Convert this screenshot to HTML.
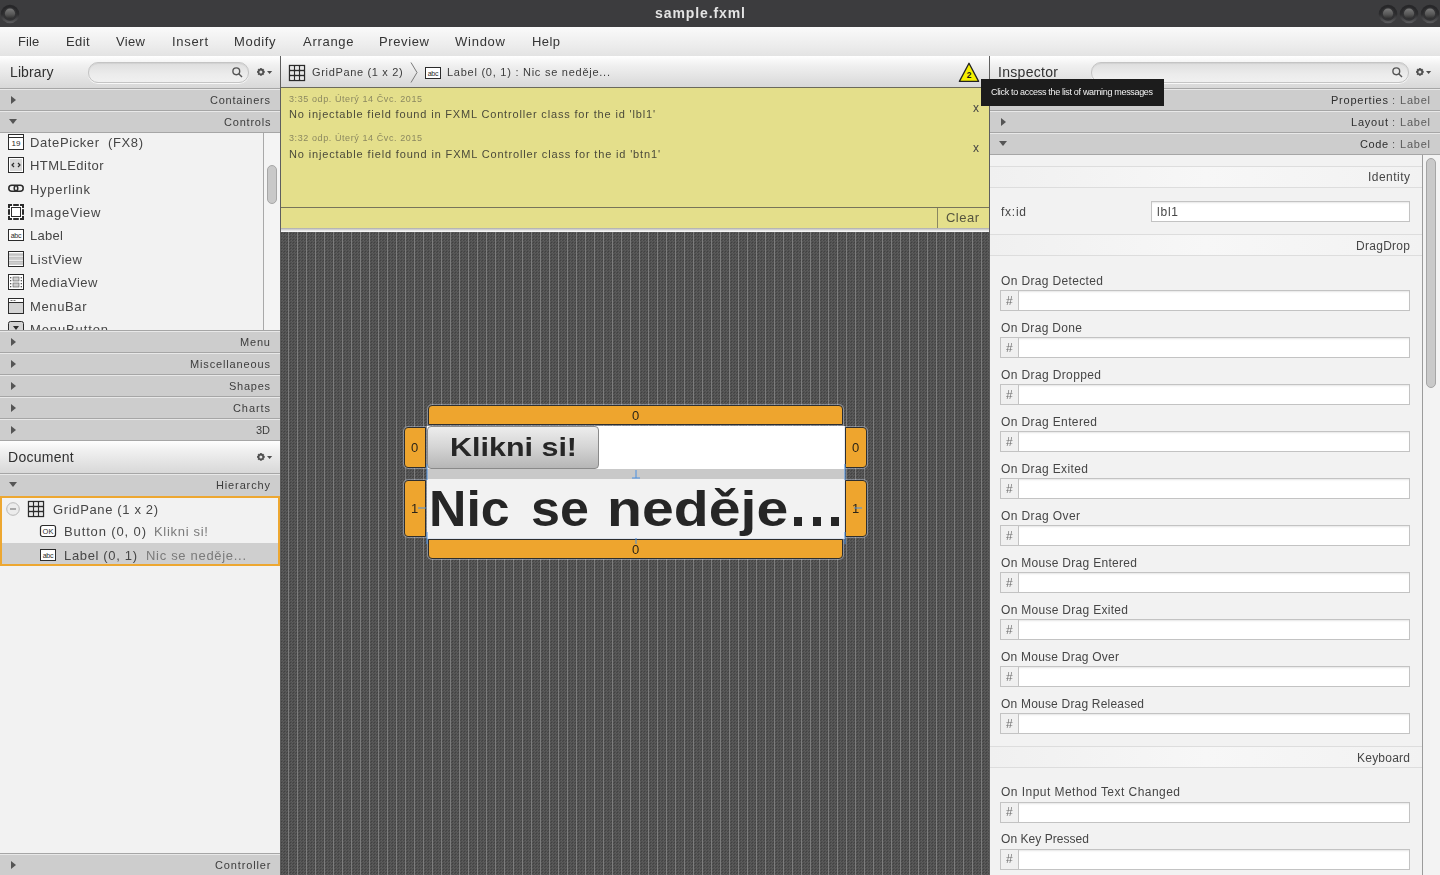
<!DOCTYPE html><html><head><meta charset="utf-8"><style>
*{box-sizing:border-box;margin:0;padding:0}
html,body{width:1440px;height:875px;overflow:hidden;background:#f2f2f2;font-family:"Liberation Sans",sans-serif;color:#333}
.a{position:absolute;white-space:pre}
.tx{will-change:transform}
svg{position:absolute;overflow:visible}
.hdr{background:linear-gradient(#fefefe,#f4f4f4 20%,#d9d9d9);}
.sec{background:#cdcdcd;border-top:1px solid #a4a4a4;box-shadow:inset 0 1px 0 #e9e9e9}
.trir{position:absolute;width:0;height:0;border-top:4px solid transparent;border-bottom:4px solid transparent;border-left:5px solid #555}
.trid{position:absolute;width:0;height:0;border-left:4px solid transparent;border-right:4px solid transparent;border-top:5px solid #555}
.srch{border:1px solid #c4c4c4;border-radius:10px;background:linear-gradient(#dedede,#ececec 60%,#f0f0f0);box-shadow:inset 0 1px 1px rgba(0,0,0,.06),0 1px 0 rgba(255,255,255,.8)}
.inp{background:#fff;border:1px solid #c3c3c3;box-shadow:inset 0 2px 2px -1px rgba(0,0,0,.10)}
.band{background:linear-gradient(90deg,#f1f1f1,#f6f6f6 50%,#f3f3f3);border-top:1px solid #dedede;border-bottom:1px solid #dedede}
</style></head><body><div class="a" style="left:0px;top:0px;width:1440px;height:27px;background:#3c3c3e"></div>
<svg style="left:0.3000000000000007px;top:3.8000000000000007px" width="20" height="20" viewBox="0 0 20 20"><defs><linearGradient id="wr" x1="0" y1="0" x2="0" y2="1"><stop offset="0" stop-color="#252527"/><stop offset="0.5" stop-color="#2c2c2e"/><stop offset="1" stop-color="#5e5e60"/></linearGradient><linearGradient id="wd" x1="0" y1="0" x2="0" y2="1"><stop offset="0" stop-color="#7a7a7a"/><stop offset="0.6" stop-color="#555"/><stop offset="1" stop-color="#2e2e2e"/></linearGradient></defs><circle cx="10" cy="10" r="9.3" fill="url(#wr)"/><circle cx="10" cy="10" r="6.8" fill="#323234"/><circle cx="10" cy="9.6" r="5.1" fill="url(#wd)"/></svg>
<svg style="left:1378px;top:3.8000000000000007px" width="20" height="20" viewBox="0 0 20 20"><defs><linearGradient id="wr" x1="0" y1="0" x2="0" y2="1"><stop offset="0" stop-color="#252527"/><stop offset="0.5" stop-color="#2c2c2e"/><stop offset="1" stop-color="#5e5e60"/></linearGradient><linearGradient id="wd" x1="0" y1="0" x2="0" y2="1"><stop offset="0" stop-color="#7a7a7a"/><stop offset="0.6" stop-color="#555"/><stop offset="1" stop-color="#2e2e2e"/></linearGradient></defs><circle cx="10" cy="10" r="9.3" fill="url(#wr)"/><circle cx="10" cy="10" r="6.8" fill="#323234"/><circle cx="10" cy="9.6" r="5.1" fill="url(#wd)"/></svg>
<svg style="left:1399px;top:3.8000000000000007px" width="20" height="20" viewBox="0 0 20 20"><defs><linearGradient id="wr" x1="0" y1="0" x2="0" y2="1"><stop offset="0" stop-color="#252527"/><stop offset="0.5" stop-color="#2c2c2e"/><stop offset="1" stop-color="#5e5e60"/></linearGradient><linearGradient id="wd" x1="0" y1="0" x2="0" y2="1"><stop offset="0" stop-color="#7a7a7a"/><stop offset="0.6" stop-color="#555"/><stop offset="1" stop-color="#2e2e2e"/></linearGradient></defs><circle cx="10" cy="10" r="9.3" fill="url(#wr)"/><circle cx="10" cy="10" r="6.8" fill="#323234"/><circle cx="10" cy="9.6" r="5.1" fill="url(#wd)"/></svg>
<svg style="left:1420px;top:3.8000000000000007px" width="20" height="20" viewBox="0 0 20 20"><defs><linearGradient id="wr" x1="0" y1="0" x2="0" y2="1"><stop offset="0" stop-color="#252527"/><stop offset="0.5" stop-color="#2c2c2e"/><stop offset="1" stop-color="#5e5e60"/></linearGradient><linearGradient id="wd" x1="0" y1="0" x2="0" y2="1"><stop offset="0" stop-color="#7a7a7a"/><stop offset="0.6" stop-color="#555"/><stop offset="1" stop-color="#2e2e2e"/></linearGradient></defs><circle cx="10" cy="10" r="9.3" fill="url(#wr)"/><circle cx="10" cy="10" r="6.8" fill="#323234"/><circle cx="10" cy="9.6" r="5.1" fill="url(#wd)"/></svg>
<div class="a tx" style="top:6.15px;font-size:14px;line-height:14px;color:#e4e4e4;font-weight:bold;letter-spacing:0.906px;left:654.55px;">sample.fxml</div>
<div class="a" style="left:0px;top:27px;width:1440px;height:29px;background:linear-gradient(#fafafa,#ebebeb 70%,#e3e3e3)"></div>
<div class="a tx" style="top:35.20px;font-size:13px;line-height:13px;color:#353535;letter-spacing:0.116px;left:18.3px;">File</div>
<div class="a tx" style="top:35.20px;font-size:13px;line-height:13px;color:#353535;letter-spacing:0.431px;left:66.3px;">Edit</div>
<div class="a tx" style="top:35.20px;font-size:13px;line-height:13px;color:#353535;letter-spacing:0.349px;left:116.3px;">View</div>
<div class="a tx" style="top:35.20px;font-size:13px;line-height:13px;color:#353535;letter-spacing:0.697px;left:171.9px;">Insert</div>
<div class="a tx" style="top:35.20px;font-size:13px;line-height:13px;color:#353535;letter-spacing:0.661px;left:234.4px;">Modify</div>
<div class="a tx" style="top:35.20px;font-size:13px;line-height:13px;color:#353535;letter-spacing:0.708px;left:302.5px;">Arrange</div>
<div class="a tx" style="top:35.20px;font-size:13px;line-height:13px;color:#353535;letter-spacing:0.625px;left:378.7px;">Preview</div>
<div class="a tx" style="top:35.20px;font-size:13px;line-height:13px;color:#353535;letter-spacing:0.750px;left:455px;">Window</div>
<div class="a tx" style="top:35.20px;font-size:13px;line-height:13px;color:#353535;letter-spacing:0.417px;left:532px;">Help</div>
<div class="a" style="left:0px;top:56px;width:280px;height:32px;background:linear-gradient(#ffffff,#f0f0f0 30%,#d8d8d8)"></div>
<div class="a tx" style="top:64.75px;font-size:14px;line-height:14px;color:#303030;letter-spacing:0.101px;left:9.7px;">Library</div>
<div class="a srch" style="left:88px;top:62px;width:161px;height:21px"></div>
<svg style="left:232px;top:67px" width="11" height="11" viewBox="0 0 11 11"><circle cx="4.3" cy="4.3" r="3.4" fill="none" stroke="#555" stroke-width="1.4"/><path d="M6.7 6.7L10 10" stroke="#555" stroke-width="1.4"/></svg>
<svg style="left:257px;top:68px" width="16" height="10" viewBox="0 0 16 10"><g fill="#4e4e4e"><rect x="2.9" y="0.1" width="2.0" height="7.6" transform="rotate(0 3.9 3.9)"/><rect x="2.9" y="0.1" width="2.0" height="7.6" transform="rotate(45 3.9 3.9)"/><rect x="2.9" y="0.1" width="2.0" height="7.6" transform="rotate(90 3.9 3.9)"/><rect x="2.9" y="0.1" width="2.0" height="7.6" transform="rotate(135 3.9 3.9)"/><circle cx="3.9" cy="3.9" r="2.9"/></g><circle cx="3.9" cy="3.9" r="1.5" fill="#e2e2e2"/><path d="M10 3h5.2l-2.6 3z" fill="#4e4e4e"/></svg>
<div class="a" style="left:0px;top:88px;width:280px;height:22px;background:#cdcdcd;border-top:1px solid #a6a6a6;box-shadow:inset 0 1px 0 #e8e8e8"></div>
<div class="trir" style="left:11px;top:96px"></div>
<div class="a tx" style="top:95.09px;font-size:11px;line-height:11px;color:#3c3c3c;letter-spacing:0.755px;right:1169.24px;">Containers</div>
<div class="a" style="left:0px;top:110px;width:280px;height:22px;background:#cdcdcd;border-top:1px solid #a6a6a6;box-shadow:inset 0 1px 0 #e8e8e8"></div>
<div class="trid" style="left:9px;top:119px"></div>
<div class="a tx" style="top:117.09px;font-size:11px;line-height:11px;color:#3c3c3c;letter-spacing:0.790px;right:1169.21px;">Controls</div>
<div class="a" style="left:0px;top:132px;width:280px;height:1px;background:#a6a6a6"></div>
<div class="a" style="left:0px;top:133px;width:280px;height:197px;background:#f2f2f2"></div>
<div class="a" style="left:263px;top:133px;width:1px;height:197px;background:#a9a9a9"></div>
<div class="a" style="left:264px;top:133px;width:16px;height:197px;background:#f4f4f4"></div>
<div class="a" style="left:267px;top:165px;width:10px;height:39px;background:#c9c9c9;border:1px solid #a7a7a7;border-radius:5px"></div>
<svg style="left:8px;top:134px" width="16" height="16" viewBox="0 0 16 16"><rect x="0.5" y="0.5" width="15" height="15" fill="#fff" stroke="#2b2b2b"/><path d="M1 3.5h14" stroke="#2b2b2b"/><text x="8" y="12.3" font-size="8" font-family="Liberation Sans" text-anchor="middle" fill="#2b2b2b">19</text></svg>
<div class="a tx" style="top:136.00px;font-size:13px;line-height:13px;color:#464646;letter-spacing:0.605px;left:29.5px;">DatePicker  (FX8)</div>
<svg style="left:8px;top:157px" width="16" height="16" viewBox="0 0 16 16"><rect x="0.5" y="0.5" width="15" height="15" fill="#fff" stroke="#2b2b2b"/><rect x="2" y="2" width="12" height="12" fill="#d8d8d8"/><path d="M6 6L4 8L6 10M10 6L12 8L10 10" fill="none" stroke="#2b2b2b" stroke-width="1.2"/></svg>
<div class="a tx" style="top:159.36px;font-size:13px;line-height:13px;color:#464646;letter-spacing:0.460px;left:29.5px;">HTMLEditor</div>
<svg style="left:8px;top:181px" width="16" height="16" viewBox="0 0 16 16"><rect x="0.8" y="4.3" width="9" height="6" rx="3" fill="none" stroke="#2b2b2b" stroke-width="1.5"/><rect x="6.2" y="4.3" width="9" height="6" rx="3" fill="none" stroke="#2b2b2b" stroke-width="1.5"/></svg>
<div class="a tx" style="top:182.72px;font-size:13px;line-height:13px;color:#464646;letter-spacing:0.727px;left:29.5px;">Hyperlink</div>
<svg style="left:8px;top:204px" width="16" height="16" viewBox="0 0 16 16"><rect x="1" y="1" width="14" height="14" fill="#fff" stroke="#2b2b2b" stroke-width="2"/><g fill="#f2f2f2"><rect x="4" y="0" width="1.2" height="2"/><rect x="10.8" y="0" width="1.2" height="2"/><rect x="4" y="14" width="1.2" height="2"/><rect x="10.8" y="14" width="1.2" height="2"/><rect x="0" y="4" width="2" height="1.2"/><rect x="0" y="10.8" width="2" height="1.2"/><rect x="14" y="4" width="2" height="1.2"/><rect x="14" y="10.8" width="2" height="1.2"/></g><rect x="3.5" y="3.5" width="9" height="9" fill="#fff" stroke="#2b2b2b"/></svg>
<div class="a tx" style="top:206.08px;font-size:13px;line-height:13px;color:#464646;letter-spacing:0.803px;left:29.5px;">ImageView</div>
<svg style="left:8px;top:227px" width="16" height="16" viewBox="0 0 16 16"><rect x="0.5" y="2.5" width="15" height="11" fill="#fff" stroke="#2b2b2b"/><text x="8" y="10.6" font-size="7" font-family="Liberation Sans" text-anchor="middle" fill="#2a2a2a" letter-spacing="-0.2">abc</text></svg>
<div class="a tx" style="top:229.44px;font-size:13px;line-height:13px;color:#464646;letter-spacing:0.297px;left:29.5px;">Label</div>
<svg style="left:8px;top:251px" width="16" height="16" viewBox="0 0 16 16"><rect x="0.5" y="0.5" width="15" height="15" fill="#fff" stroke="#2b2b2b"/><rect x="1" y="3" width="14" height="2.5" fill="#cfcfcf"/><rect x="1" y="6.8" width="14" height="2.5" fill="#cfcfcf"/><rect x="1" y="10.6" width="14" height="2.5" fill="#cfcfcf"/><path d="M1 2.8h14M1 6.6h14M1 10.4h14M1 13.3h14" stroke="#888" stroke-width="0.5"/></svg>
<div class="a tx" style="top:252.80px;font-size:13px;line-height:13px;color:#464646;letter-spacing:0.545px;left:29.5px;">ListView</div>
<svg style="left:8px;top:274px" width="16" height="16" viewBox="0 0 16 16"><rect x="0.5" y="0.5" width="15" height="15" fill="#fff" stroke="#2b2b2b"/><rect x="5" y="3" width="6" height="4" fill="#ccc" stroke="#555" stroke-width="0.6"/><rect x="5" y="9" width="6" height="4" fill="#ccc" stroke="#555" stroke-width="0.6"/><g fill="#555"><rect x="2" y="3" width="1.3" height="1.3"/><rect x="2" y="6" width="1.3" height="1.3"/><rect x="2" y="9" width="1.3" height="1.3"/><rect x="2" y="12" width="1.3" height="1.3"/><rect x="12.7" y="3" width="1.3" height="1.3"/><rect x="12.7" y="6" width="1.3" height="1.3"/><rect x="12.7" y="9" width="1.3" height="1.3"/><rect x="12.7" y="12" width="1.3" height="1.3"/></g></svg>
<div class="a tx" style="top:276.16px;font-size:13px;line-height:13px;color:#464646;letter-spacing:0.518px;left:29.5px;">MediaView</div>
<svg style="left:8px;top:298px" width="16" height="16" viewBox="0 0 16 16"><rect x="0.5" y="0.5" width="15" height="15" fill="#d4d4d4" stroke="#2b2b2b"/><rect x="1" y="1" width="14" height="3" fill="#fff"/><path d="M1 4.5h14" stroke="#2b2b2b"/><path d="M2.5 2.5h2M5.5 2.5h2" stroke="#555" stroke-width="0.8"/></svg>
<div class="a tx" style="top:299.52px;font-size:13px;line-height:13px;color:#464646;letter-spacing:0.625px;left:29.5px;">MenuBar</div>
<svg style="left:8px;top:321px" width="16" height="16" viewBox="0 0 16 16"><rect x="0.5" y="0.5" width="15" height="15" rx="2" fill="#d4d4d4" stroke="#2b2b2b"/><path d="M5 5h6l-3 4z" fill="#2b2b2b"/></svg>
<div class="a tx" style="top:322.88px;font-size:13px;line-height:13px;color:#464646;letter-spacing:0.877px;left:29.5px;">MenuButton</div>
<div class="a" style="left:0px;top:330px;width:280px;height:22px;background:#cdcdcd;border-top:1px solid #a6a6a6;box-shadow:inset 0 1px 0 #e8e8e8"></div>
<div class="trir" style="left:11px;top:338px"></div>
<div class="a tx" style="top:337.19px;font-size:11px;line-height:11px;color:#3c3c3c;letter-spacing:0.823px;right:1169.18px;">Menu</div>
<div class="a" style="left:0px;top:352px;width:280px;height:22px;background:#cdcdcd;border-top:1px solid #a6a6a6;box-shadow:inset 0 1px 0 #e8e8e8"></div>
<div class="trir" style="left:11px;top:360px"></div>
<div class="a tx" style="top:359.19px;font-size:11px;line-height:11px;color:#3c3c3c;letter-spacing:0.858px;right:1169.14px;">Miscellaneous</div>
<div class="a" style="left:0px;top:374px;width:280px;height:22px;background:#cdcdcd;border-top:1px solid #a6a6a6;box-shadow:inset 0 1px 0 #e8e8e8"></div>
<div class="trir" style="left:11px;top:382px"></div>
<div class="a tx" style="top:381.19px;font-size:11px;line-height:11px;color:#3c3c3c;letter-spacing:0.738px;right:1169.26px;">Shapes</div>
<div class="a" style="left:0px;top:396px;width:280px;height:22px;background:#cdcdcd;border-top:1px solid #a6a6a6;box-shadow:inset 0 1px 0 #e8e8e8"></div>
<div class="trir" style="left:11px;top:404px"></div>
<div class="a tx" style="top:403.19px;font-size:11px;line-height:11px;color:#3c3c3c;letter-spacing:0.919px;right:1169.08px;">Charts</div>
<div class="a" style="left:0px;top:418px;width:280px;height:22px;background:#cdcdcd;border-top:1px solid #a6a6a6;box-shadow:inset 0 1px 0 #e8e8e8"></div>
<div class="trir" style="left:11px;top:426px"></div>
<div class="a tx" style="top:425.19px;font-size:11px;line-height:11px;color:#3c3c3c;letter-spacing:-0.062px;right:1170.06px;">3D</div>
<div class="a" style="left:0px;top:440px;width:280px;height:1px;background:#a6a6a6"></div>
<div class="a" style="left:0px;top:441px;width:280px;height:32px;background:linear-gradient(#ffffff,#f0f0f0 30%,#d8d8d8)"></div>
<div class="a tx" style="top:450.45px;font-size:14px;line-height:14px;color:#303030;letter-spacing:0.270px;left:8px;">Document</div>
<svg style="left:257px;top:453px" width="16" height="10" viewBox="0 0 16 10"><g fill="#4e4e4e"><rect x="2.9" y="0.1" width="2.0" height="7.6" transform="rotate(0 3.9 3.9)"/><rect x="2.9" y="0.1" width="2.0" height="7.6" transform="rotate(45 3.9 3.9)"/><rect x="2.9" y="0.1" width="2.0" height="7.6" transform="rotate(90 3.9 3.9)"/><rect x="2.9" y="0.1" width="2.0" height="7.6" transform="rotate(135 3.9 3.9)"/><circle cx="3.9" cy="3.9" r="2.9"/></g><circle cx="3.9" cy="3.9" r="1.5" fill="#e2e2e2"/><path d="M10 3h5.2l-2.6 3z" fill="#4e4e4e"/></svg>
<div class="a" style="left:0px;top:473px;width:280px;height:23px;background:#cdcdcd;border-top:1px solid #a6a6a6;box-shadow:inset 0 1px 0 #e8e8e8"></div>
<div class="trid" style="left:9px;top:482px"></div>
<div class="a tx" style="top:479.69px;font-size:11px;line-height:11px;color:#3c3c3c;letter-spacing:0.865px;right:1169.13px;">Hierarchy</div>
<div class="a" style="left:0px;top:496px;width:280px;height:70px;background:#f2f2f2;border:2px solid #eda731"></div>
<div class="a" style="left:2px;top:543px;width:276px;height:21px;background:#cfcfcf"></div>
<svg style="left:6px;top:502px" width="15" height="15" viewBox="0 0 15 15"><circle cx="7" cy="7" r="6.3" fill="#ececec" stroke="#b8b8b8"/><path d="M4 7h6" stroke="#999" stroke-width="1.6"/></svg>
<svg style="left:28px;top:501px" width="16" height="16" viewBox="0 0 16 16"><rect x="0.5" y="0.5" width="15" height="15" fill="#fff" stroke="#2b2b2b"/><path d="M5.5 0.5v15M10.5 0.5v15M0.5 5.5h15M0.5 10.5h15" stroke="#2b2b2b" stroke-width="1.3"/><rect x="0.5" y="0.5" width="15" height="15" fill="none" stroke="#2b2b2b" stroke-width="1.3"/><g fill="#bbb"><rect x="2.4" y="2.4" width="1.2" height="1.2"/><rect x="7.4" y="2.4" width="1.2" height="1.2"/><rect x="12.4" y="2.4" width="1.2" height="1.2"/><rect x="2.4" y="7.4" width="1.2" height="1.2"/><rect x="7.4" y="7.4" width="1.2" height="1.2"/><rect x="12.4" y="7.4" width="1.2" height="1.2"/><rect x="2.4" y="12.4" width="1.2" height="1.2"/><rect x="7.4" y="12.4" width="1.2" height="1.2"/><rect x="12.4" y="12.4" width="1.2" height="1.2"/></g></svg>
<div class="a tx" style="top:502.60px;font-size:13px;line-height:13px;color:#464646;letter-spacing:0.642px;left:52.5px;">GridPane (1 x 2)</div>
<svg style="left:40px;top:525px" width="16" height="16" viewBox="0 0 16 16"><rect x="0.5" y="0.5" width="15" height="11" rx="2" fill="#fff" stroke="#2b2b2b" stroke-width="1.2"/><text x="8" y="9" font-size="7.5" font-family="Liberation Sans" text-anchor="middle" fill="#2b2b2b">OK</text></svg>
<div class="a tx" style="top:524.70px;font-size:13px;line-height:13px;color:#464646;letter-spacing:0.871px;left:63.5px;">Button (0, 0)</div>
<div class="a tx" style="top:524.70px;font-size:13px;line-height:13px;color:#7a7a7a;letter-spacing:0.701px;left:153.5px;">Klikni si!</div>
<svg style="left:40px;top:547px" width="16" height="16" viewBox="0 0 16 16"><rect x="0.5" y="2.5" width="15" height="11" fill="#fff" stroke="#2b2b2b"/><text x="8" y="10.6" font-size="7" font-family="Liberation Sans" text-anchor="middle" fill="#2a2a2a" letter-spacing="-0.2">abc</text></svg>
<div class="a tx" style="top:548.80px;font-size:13px;line-height:13px;color:#464646;letter-spacing:0.658px;left:63.5px;">Label (0, 1)</div>
<div class="a tx" style="top:548.80px;font-size:13px;line-height:13px;color:#7a7a7a;letter-spacing:0.693px;left:145.5px;">Nic se neděje...</div>
<div class="a" style="left:0px;top:853px;width:280px;height:22px;background:#cdcdcd;border-top:1px solid #a6a6a6;box-shadow:inset 0 1px 0 #e8e8e8"></div>
<div class="trir" style="left:11px;top:861px"></div>
<div class="a tx" style="top:860.19px;font-size:11px;line-height:11px;color:#3c3c3c;letter-spacing:0.868px;right:1169.13px;">Controller</div>
<div class="a" style="left:280px;top:56px;width:1px;height:819px;background:#5e5e5e"></div>
<div class="a" style="left:281px;top:56px;width:708px;height:31px;background:linear-gradient(#ffffff,#f0f0f0 30%,#d8d8d8)"></div>
<div class="a" style="left:281px;top:87px;width:708px;height:1px;background:#6b6a5a"></div>
<svg style="left:289px;top:65px" width="16" height="16" viewBox="0 0 16 16"><rect x="0.5" y="0.5" width="15" height="15" fill="#fff" stroke="#2b2b2b"/><path d="M5.5 0.5v15M10.5 0.5v15M0.5 5.5h15M0.5 10.5h15" stroke="#2b2b2b" stroke-width="1.3"/><rect x="0.5" y="0.5" width="15" height="15" fill="none" stroke="#2b2b2b" stroke-width="1.3"/><g fill="#bbb"><rect x="2.4" y="2.4" width="1.2" height="1.2"/><rect x="7.4" y="2.4" width="1.2" height="1.2"/><rect x="12.4" y="2.4" width="1.2" height="1.2"/><rect x="2.4" y="7.4" width="1.2" height="1.2"/><rect x="7.4" y="7.4" width="1.2" height="1.2"/><rect x="12.4" y="7.4" width="1.2" height="1.2"/><rect x="2.4" y="12.4" width="1.2" height="1.2"/><rect x="7.4" y="12.4" width="1.2" height="1.2"/><rect x="12.4" y="12.4" width="1.2" height="1.2"/></g></svg>
<div class="a tx" style="top:67.39px;font-size:11px;line-height:11px;color:#3c3c3c;letter-spacing:0.666px;left:311.8px;">GridPane (1 x 2)</div>
<svg style="left:410px;top:62px" width="8" height="21" viewBox="0 0 8 21"><path d="M1 0.5L7 10.5L1 20.5" fill="none" stroke="#7a7a7a" stroke-width="1"/></svg>
<svg style="left:425px;top:65px" width="16" height="16" viewBox="0 0 16 16"><rect x="0.5" y="2.5" width="15" height="11" fill="#fff" stroke="#2b2b2b"/><text x="8" y="10.6" font-size="7" font-family="Liberation Sans" text-anchor="middle" fill="#2a2a2a" letter-spacing="-0.2">abc</text></svg>
<div class="a tx" style="top:67.39px;font-size:11px;line-height:11px;color:#3c3c3c;letter-spacing:0.745px;left:447px;">Label (0, 1) : Nic se neděje...</div>
<svg style="left:958px;top:62px" width="22" height="21" viewBox="0 0 22 21"><path d="M11 1.3L20.6 19.4H1.4Z" fill="#f5f000" stroke="#222" stroke-width="1.3" stroke-linejoin="round"/><text x="11" y="15.6" font-size="8.5" font-weight="bold" font-family="Liberation Sans" text-anchor="middle" fill="#1a1a1a">2</text></svg>
<div class="a" style="left:281px;top:88px;width:708px;height:140px;background:#e4df8b"></div>
<div class="a tx" style="top:94.68px;font-size:9px;line-height:9px;color:#8b8860;letter-spacing:0.590px;left:289px;">3:35 odp. Úterý 14 Čvc. 2015</div>
<div class="a tx" style="top:109.29px;font-size:11px;line-height:11px;color:#4b4a3a;letter-spacing:0.834px;left:289px;">No injectable field found in FXML Controller class for the id &#x27;lbl1&#x27;</div>
<div class="a tx" style="top:102.14px;font-size:12px;line-height:12px;color:#444;left:972.5px;">x</div>
<div class="a tx" style="top:134.48px;font-size:9px;line-height:9px;color:#8b8860;letter-spacing:0.590px;left:289px;">3:32 odp. Úterý 14 Čvc. 2015</div>
<div class="a tx" style="top:149.29px;font-size:11px;line-height:11px;color:#4b4a3a;letter-spacing:0.845px;left:289px;">No injectable field found in FXML Controller class for the id &#x27;btn1&#x27;</div>
<div class="a tx" style="top:142.14px;font-size:12px;line-height:12px;color:#444;left:972.5px;">x</div>
<div class="a" style="left:281px;top:207px;width:708px;height:1px;background:#77745a"></div>
<div class="a" style="left:937px;top:208px;width:1px;height:20px;background:#8a8760"></div>
<div class="a tx" style="top:211.00px;font-size:13px;line-height:13px;color:#55543f;letter-spacing:0.480px;left:946px;">Clear</div>
<div class="a" style="left:281px;top:228px;width:708px;height:4px;background:linear-gradient(#a9a9a9,#dcdcdc 50%,#ffffff)"></div>
<svg style="left:281px;top:232px" width="708" height="643"><defs><pattern id="chk" x="0" y="0" width="3" height="3" patternUnits="userSpaceOnUse"><rect width="3" height="3" fill="#525252"/><rect x="0" y="1" width="1" height="1" fill="#414141"/><rect x="1" y="2" width="1" height="1" fill="#5f5f5f"/><rect x="2" y="0" width="1" height="1" fill="#5c5c5c"/><rect x="2" y="2" width="1" height="1" fill="#484848"/></pattern><pattern id="ln" x="7" y="0" width="9" height="9" patternUnits="userSpaceOnUse"><rect width="1" height="9" fill="#7c7c7c"/></pattern></defs><rect width="708" height="643" fill="url(#chk)"/><rect width="708" height="643" fill="url(#ln)"/></svg>
<div class="a" style="left:427px;top:426px;width:418px;height:43px;background:#ffffff"></div>
<div class="a" style="left:427px;top:469px;width:418px;height:10px;background:#c9c9c9"></div>
<div class="a" style="left:427px;top:479px;width:418px;height:60px;background:#f2f2f2"></div>
<div class="a" style="left:427px;top:426px;width:172px;height:43px;background:linear-gradient(#ededed,#d4d4d4 50%,#b6b6b6);border:1px solid #8a8a8a;border-radius:4px"></div>
<div class="a tx" style="top:433.59px;font-size:26px;line-height:26px;color:#262626;font-weight:bold;transform:scaleX(1.1720);transform-origin:left center;left:449.6px;">Klikni si!</div>
<div class="a tx" style="top:483.57px;font-size:50px;line-height:50px;color:#262626;font-weight:bold;transform:scaleX(1.0360);transform-origin:left center;left:428.9px;">Nic</div>
<div class="a tx" style="top:483.57px;font-size:50px;line-height:50px;color:#262626;font-weight:bold;transform:scaleX(1.0410);transform-origin:left center;left:530.6px;">se</div>
<div class="a tx" style="top:483.57px;font-size:50px;line-height:50px;color:#262626;font-weight:bold;transform:scaleX(1.1440);transform-origin:left center;left:606.8px;">neděje</div>
<div class="a" style="left:794px;top:517px;width:8px;height:8.6px;background:#262626"></div>
<div class="a" style="left:812.6px;top:517px;width:8px;height:8.6px;background:#262626"></div>
<div class="a" style="left:831.2px;top:517px;width:8px;height:8.6px;background:#262626"></div>
<div class="a" style="left:428px;top:405px;width:415px;height:20px;background:#eea52e;border:1px solid #2e2e2e;border-radius:4px 4px 0 0;box-shadow:0 0 0 1px rgba(200,210,230,.45)"></div>
<div class="a" style="left:428px;top:539px;width:415px;height:20px;background:#eea52e;border:1px solid #2e2e2e;border-radius:0 0 4px 4px;box-shadow:0 0 0 1px rgba(200,210,230,.45)"></div>
<div class="a" style="left:404px;top:427px;width:22px;height:41px;background:#eea52e;border:1px solid #2e2e2e;border-radius:4px 0 0 4px;box-shadow:0 0 0 1px rgba(200,210,230,.45)"></div>
<div class="a" style="left:404px;top:480px;width:22px;height:57px;background:#eea52e;border:1px solid #2e2e2e;border-radius:4px 0 0 4px;box-shadow:0 0 0 1px rgba(200,210,230,.45)"></div>
<div class="a" style="left:845px;top:427px;width:22px;height:41px;background:#eea52e;border:1px solid #2e2e2e;border-radius:0 4px 4px 0;box-shadow:0 0 0 1px rgba(200,210,230,.45)"></div>
<div class="a" style="left:845px;top:480px;width:22px;height:57px;background:#eea52e;border:1px solid #2e2e2e;border-radius:0 4px 4px 0;box-shadow:0 0 0 1px rgba(200,210,230,.45)"></div>
<div class="a tx" style="top:408.50px;font-size:13px;line-height:13px;color:#2a2418;left:631.88px;">0</div>
<div class="a tx" style="top:542.50px;font-size:13px;line-height:13px;color:#2a2418;left:631.88px;">0</div>
<div class="a tx" style="top:440.50px;font-size:13px;line-height:13px;color:#2a2418;left:411.38px;">0</div>
<div class="a tx" style="top:440.50px;font-size:13px;line-height:13px;color:#2a2418;left:851.88px;">0</div>
<div class="a tx" style="top:501.50px;font-size:13px;line-height:13px;color:#2a2418;left:411.38px;">1</div>
<div class="a tx" style="top:501.50px;font-size:13px;line-height:13px;color:#2a2418;left:851.88px;">1</div>
<svg style="left:400px;top:400px" width="480" height="170"><g stroke="#4a90e2" stroke-width="1" fill="none"><path d="M236 70v8M232 78h8"/><path d="M18 108h8M454 108h8"/><path d="M236 138v6"/><path d="M27 64v16M27 132v12M445 64v16M445 132v12"/></g></svg>
<div class="a" style="left:989px;top:56px;width:1px;height:819px;background:#5e5e5e"></div>
<div class="a" style="left:990px;top:56px;width:450px;height:32px;background:linear-gradient(#ffffff,#f0f0f0 30%,#d8d8d8)"></div>
<div class="a tx" style="top:65.15px;font-size:14px;line-height:14px;color:#303030;letter-spacing:0.301px;left:998px;">Inspector</div>
<div class="a srch" style="left:1091px;top:62px;width:318px;height:21px"></div>
<svg style="left:1392px;top:67px" width="11" height="11" viewBox="0 0 11 11"><circle cx="4.3" cy="4.3" r="3.4" fill="none" stroke="#555" stroke-width="1.4"/><path d="M6.7 6.7L10 10" stroke="#555" stroke-width="1.4"/></svg>
<svg style="left:1416px;top:68px" width="16" height="10" viewBox="0 0 16 10"><g fill="#4e4e4e"><rect x="2.9" y="0.1" width="2.0" height="7.6" transform="rotate(0 3.9 3.9)"/><rect x="2.9" y="0.1" width="2.0" height="7.6" transform="rotate(45 3.9 3.9)"/><rect x="2.9" y="0.1" width="2.0" height="7.6" transform="rotate(90 3.9 3.9)"/><rect x="2.9" y="0.1" width="2.0" height="7.6" transform="rotate(135 3.9 3.9)"/><circle cx="3.9" cy="3.9" r="2.9"/></g><circle cx="3.9" cy="3.9" r="1.5" fill="#e2e2e2"/><path d="M10 3h5.2l-2.6 3z" fill="#4e4e4e"/></svg>
<div class="a" style="left:990px;top:88px;width:450px;height:22px;background:#cdcdcd;border-top:1px solid #a6a6a6;box-shadow:inset 0 1px 0 #e8e8e8"></div>
<div class="trir" style="left:1001px;top:96px"></div>
<div class="a tx" style="top:95.39px;font-size:11px;line-height:11px;color:#5a5a5a;letter-spacing:0.770px;right:9.23px;">Label</div>
<div class="a tx" style="top:95.39px;font-size:11px;line-height:11px;color:#2e2e2e;letter-spacing:0.762px;right:50.94px;">Properties</div>
<div class="a tx" style="top:95.39px;font-size:11px;line-height:11px;color:#5a5a5a;right:45.00px;">:</div>
<div class="a" style="left:990px;top:110px;width:450px;height:22px;background:#cdcdcd;border-top:1px solid #a6a6a6;box-shadow:inset 0 1px 0 #e8e8e8"></div>
<div class="trir" style="left:1001px;top:118px"></div>
<div class="a tx" style="top:117.39px;font-size:11px;line-height:11px;color:#5a5a5a;letter-spacing:0.770px;right:9.23px;">Label</div>
<div class="a tx" style="top:117.39px;font-size:11px;line-height:11px;color:#2e2e2e;letter-spacing:0.794px;right:50.91px;">Layout</div>
<div class="a tx" style="top:117.39px;font-size:11px;line-height:11px;color:#5a5a5a;right:45.00px;">:</div>
<div class="a" style="left:990px;top:132px;width:450px;height:22px;background:#cdcdcd;border-top:1px solid #a6a6a6;box-shadow:inset 0 1px 0 #e8e8e8"></div>
<div class="trid" style="left:999px;top:141px"></div>
<div class="a tx" style="top:139.39px;font-size:11px;line-height:11px;color:#5a5a5a;letter-spacing:0.770px;right:9.23px;">Label</div>
<div class="a tx" style="top:139.39px;font-size:11px;line-height:11px;color:#2e2e2e;letter-spacing:0.568px;right:51.13px;">Code</div>
<div class="a tx" style="top:139.39px;font-size:11px;line-height:11px;color:#5a5a5a;right:45.00px;">:</div>
<div class="a" style="left:990px;top:154px;width:450px;height:1px;background:#a6a6a6"></div>
<div class="a" style="left:990px;top:155px;width:450px;height:720px;background:#f2f2f2"></div>
<div class="a" style="left:1422px;top:155px;width:1px;height:720px;background:#9b9b9b"></div>
<div class="a" style="left:1423px;top:155px;width:17px;height:720px;background:#f3f3f3"></div>
<div class="a" style="left:1426px;top:158px;width:10px;height:230px;background:#c9c9c9;border:1px solid #a5a5a5;border-radius:5px"></div>
<div class="a" style="left:990px;top:166px;width:432px;height:22px;background:linear-gradient(90deg,#f0f0f0,#f7f7f7 50%,#f2f2f2);border-top:1px solid #dddddd;border-bottom:1px solid #dddddd"></div>
<div class="a tx" style="top:170.84px;font-size:12px;line-height:12px;color:#464646;letter-spacing:0.471px;right:30.03px;">Identity</div>
<div class="a tx" style="top:206.34px;font-size:12px;line-height:12px;color:#464646;letter-spacing:0.746px;left:1001px;">fx:id</div>
<div class="a inp" style="left:1151px;top:201px;width:259px;height:21px"></div>
<div class="a tx" style="top:205.84px;font-size:12px;line-height:12px;color:#464646;letter-spacing:0.771px;left:1157px;">lbl1</div>
<div class="a" style="left:990px;top:234px;width:432px;height:22px;background:linear-gradient(90deg,#f0f0f0,#f7f7f7 50%,#f2f2f2);border-top:1px solid #dddddd;border-bottom:1px solid #dddddd"></div>
<div class="a tx" style="top:239.84px;font-size:12px;line-height:12px;color:#464646;letter-spacing:0.281px;right:30.22px;">DragDrop</div>
<div class="a tx" style="top:274.74px;font-size:12px;line-height:12px;color:#464646;letter-spacing:0.352px;left:1001px;">On Drag Detected</div>
<div class="a inp" style="left:1000px;top:290.4px;width:410px;height:21px"></div>
<div class="a" style="left:1000px;top:290.4px;width:19px;height:21px;background:#f0f0f0;border:1px solid #c3c3c3"></div>
<div class="a tx" style="top:294.74px;font-size:12px;line-height:12px;color:#707070;left:1006.16px;">#</div>
<div class="a tx" style="top:321.74px;font-size:12px;line-height:12px;color:#464646;letter-spacing:0.330px;left:1001px;">On Drag Done</div>
<div class="a inp" style="left:1000px;top:337.4px;width:410px;height:21px"></div>
<div class="a" style="left:1000px;top:337.4px;width:19px;height:21px;background:#f0f0f0;border:1px solid #c3c3c3"></div>
<div class="a tx" style="top:341.74px;font-size:12px;line-height:12px;color:#707070;left:1006.16px;">#</div>
<div class="a tx" style="top:368.74px;font-size:12px;line-height:12px;color:#464646;letter-spacing:0.377px;left:1001px;">On Drag Dropped</div>
<div class="a inp" style="left:1000px;top:384.4px;width:410px;height:21px"></div>
<div class="a" style="left:1000px;top:384.4px;width:19px;height:21px;background:#f0f0f0;border:1px solid #c3c3c3"></div>
<div class="a tx" style="top:388.74px;font-size:12px;line-height:12px;color:#707070;left:1006.16px;">#</div>
<div class="a tx" style="top:415.74px;font-size:12px;line-height:12px;color:#464646;letter-spacing:0.377px;left:1001px;">On Drag Entered</div>
<div class="a inp" style="left:1000px;top:431.4px;width:410px;height:21px"></div>
<div class="a" style="left:1000px;top:431.4px;width:19px;height:21px;background:#f0f0f0;border:1px solid #c3c3c3"></div>
<div class="a tx" style="top:435.74px;font-size:12px;line-height:12px;color:#707070;left:1006.16px;">#</div>
<div class="a tx" style="top:462.74px;font-size:12px;line-height:12px;color:#464646;letter-spacing:0.381px;left:1001px;">On Drag Exited</div>
<div class="a inp" style="left:1000px;top:478.4px;width:410px;height:21px"></div>
<div class="a" style="left:1000px;top:478.4px;width:19px;height:21px;background:#f0f0f0;border:1px solid #c3c3c3"></div>
<div class="a tx" style="top:482.74px;font-size:12px;line-height:12px;color:#707070;left:1006.16px;">#</div>
<div class="a tx" style="top:509.74px;font-size:12px;line-height:12px;color:#464646;letter-spacing:0.391px;left:1001px;">On Drag Over</div>
<div class="a inp" style="left:1000px;top:525.4px;width:410px;height:21px"></div>
<div class="a" style="left:1000px;top:525.4px;width:19px;height:21px;background:#f0f0f0;border:1px solid #c3c3c3"></div>
<div class="a tx" style="top:529.74px;font-size:12px;line-height:12px;color:#707070;left:1006.16px;">#</div>
<div class="a tx" style="top:556.74px;font-size:12px;line-height:12px;color:#464646;letter-spacing:0.296px;left:1001px;">On Mouse Drag Entered</div>
<div class="a inp" style="left:1000px;top:572.4px;width:410px;height:21px"></div>
<div class="a" style="left:1000px;top:572.4px;width:19px;height:21px;background:#f0f0f0;border:1px solid #c3c3c3"></div>
<div class="a tx" style="top:576.74px;font-size:12px;line-height:12px;color:#707070;left:1006.16px;">#</div>
<div class="a tx" style="top:603.74px;font-size:12px;line-height:12px;color:#464646;letter-spacing:0.295px;left:1001px;">On Mouse Drag Exited</div>
<div class="a inp" style="left:1000px;top:619.4px;width:410px;height:21px"></div>
<div class="a" style="left:1000px;top:619.4px;width:19px;height:21px;background:#f0f0f0;border:1px solid #c3c3c3"></div>
<div class="a tx" style="top:623.74px;font-size:12px;line-height:12px;color:#707070;left:1006.16px;">#</div>
<div class="a tx" style="top:650.74px;font-size:12px;line-height:12px;color:#464646;letter-spacing:0.233px;left:1001px;">On Mouse Drag Over</div>
<div class="a inp" style="left:1000px;top:666.4px;width:410px;height:21px"></div>
<div class="a" style="left:1000px;top:666.4px;width:19px;height:21px;background:#f0f0f0;border:1px solid #c3c3c3"></div>
<div class="a tx" style="top:670.74px;font-size:12px;line-height:12px;color:#707070;left:1006.16px;">#</div>
<div class="a tx" style="top:697.74px;font-size:12px;line-height:12px;color:#464646;letter-spacing:0.202px;left:1001px;">On Mouse Drag Released</div>
<div class="a inp" style="left:1000px;top:713.4px;width:410px;height:21px"></div>
<div class="a" style="left:1000px;top:713.4px;width:19px;height:21px;background:#f0f0f0;border:1px solid #c3c3c3"></div>
<div class="a tx" style="top:717.74px;font-size:12px;line-height:12px;color:#707070;left:1006.16px;">#</div>
<div class="a" style="left:990px;top:746px;width:432px;height:22px;background:linear-gradient(90deg,#f0f0f0,#f7f7f7 50%,#f2f2f2);border-top:1px solid #dddddd;border-bottom:1px solid #dddddd"></div>
<div class="a tx" style="top:751.84px;font-size:12px;line-height:12px;color:#464646;letter-spacing:0.232px;right:30.27px;">Keyboard</div>
<div class="a tx" style="top:786.04px;font-size:12px;line-height:12px;color:#464646;letter-spacing:0.461px;left:1001px;">On Input Method Text Changed</div>
<div class="a inp" style="left:1000px;top:801.7px;width:410px;height:21px"></div>
<div class="a" style="left:1000px;top:801.7px;width:19px;height:21px;background:#f0f0f0;border:1px solid #c3c3c3"></div>
<div class="a tx" style="top:806.04px;font-size:12px;line-height:12px;color:#707070;left:1006.16px;">#</div>
<div class="a tx" style="top:832.94px;font-size:12px;line-height:12px;color:#464646;letter-spacing:0.048px;left:1001px;">On Key Pressed</div>
<div class="a inp" style="left:1000px;top:848.6px;width:410px;height:21px"></div>
<div class="a" style="left:1000px;top:848.6px;width:19px;height:21px;background:#f0f0f0;border:1px solid #c3c3c3"></div>
<div class="a tx" style="top:852.94px;font-size:12px;line-height:12px;color:#707070;left:1006.16px;">#</div>
<div class="a" style="left:981px;top:79px;width:183px;height:27px;background:#1c1c1c;z-index:5"></div>
<div class="a tx" style="top:88.38px;font-size:9px;line-height:9px;color:#f2f2f2;z-index:6;letter-spacing:-0.327px;left:991px;">Click to access the list of warning messages</div></body></html>
